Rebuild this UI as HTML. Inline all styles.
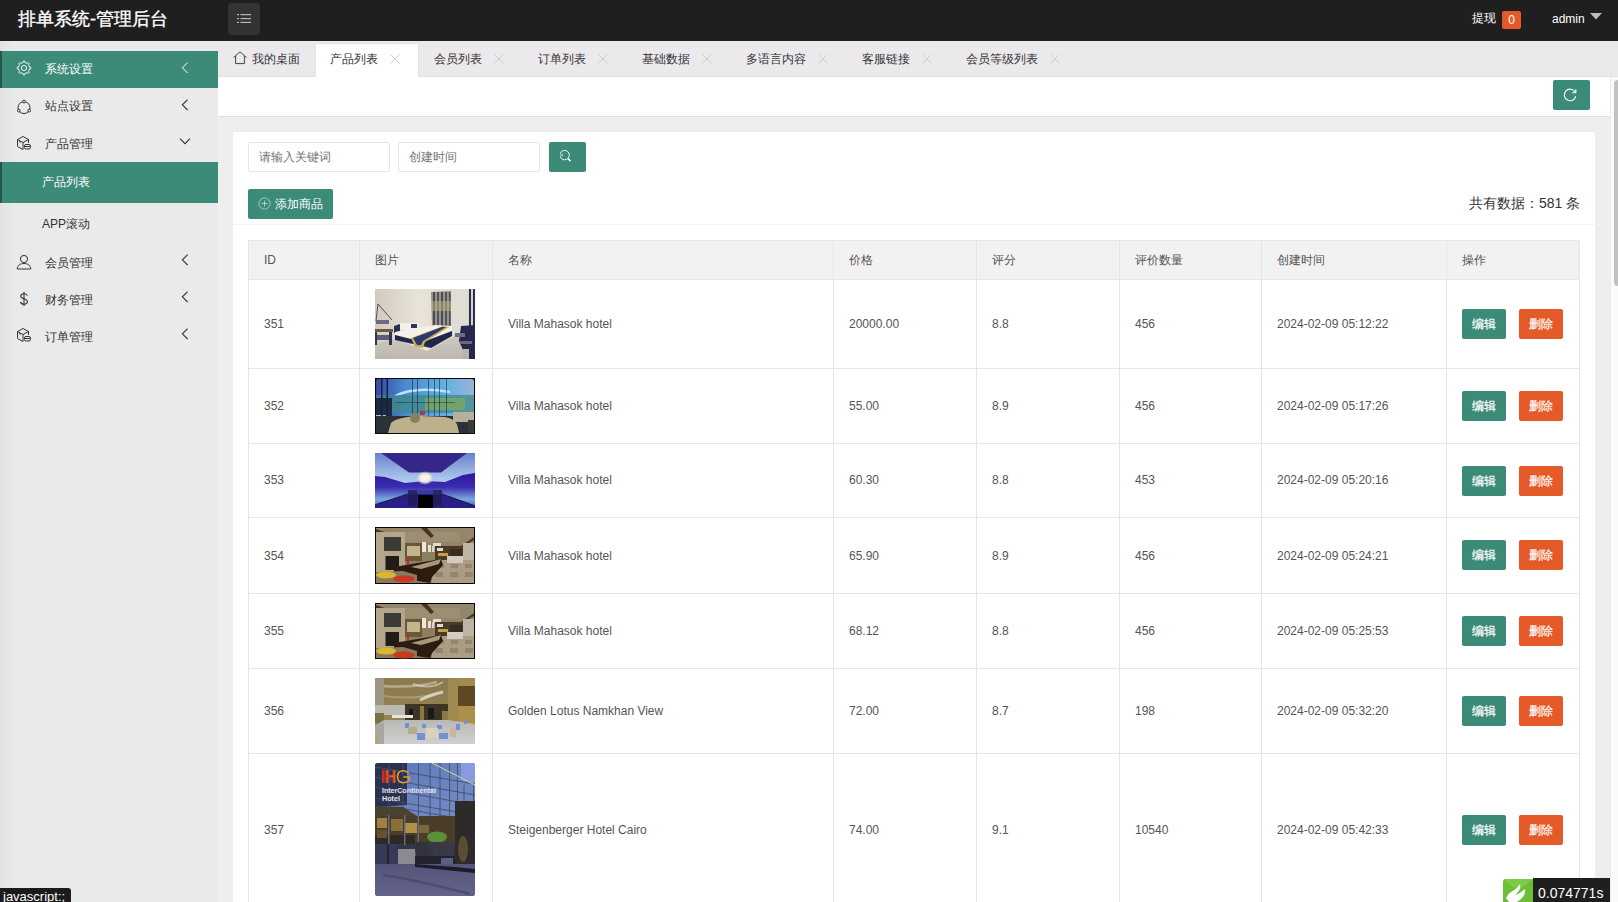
<!DOCTYPE html>
<html><head><meta charset="utf-8">
<style>
*{box-sizing:border-box;margin:0;padding:0}
html,body{width:1618px;height:902px;overflow:hidden;font-family:"Liberation Sans",sans-serif;background:#eeeeee;color:#333}
.abs{position:absolute}
#top{position:absolute;left:0;top:0;width:1618px;height:41px;background:#1f1f1f}
#title{position:absolute;left:18px;top:7px;font-size:18px;color:#fff;line-height:24px;white-space:nowrap;-webkit-text-stroke:0.35px #fff}
#burger{position:absolute;left:228px;top:3px;width:32px;height:32px;background:#333;border-radius:3px}
#side{position:absolute;left:0;top:41px;width:218px;height:861px;background:#eaeaea}
.mi{position:absolute;left:0;width:218px;height:37px;font-size:12px;color:#333;line-height:37px}
.mi .t{position:absolute;left:45px;top:0}
.mi svg.ic{position:absolute;left:16px;top:11px}
.mi svg.ar{position:absolute;left:178.6px;top:10.2px}
.green{background:#3c8b79;color:#fff;box-shadow:inset 2px 0 0 #25584b}
#tabs{position:absolute;left:218px;top:41px;width:1400px;height:36px;background:#ebe9ec;border-bottom:1px solid #e2e2e2}
.tab{position:absolute;top:2px;height:34px;line-height:32px;font-size:12px;color:#333;white-space:nowrap}
.tab .x{position:absolute;top:11px}
#wbar{position:absolute;left:218px;top:77px;width:1392px;height:40px;background:#fff;border-bottom:1px solid #dedede}
#card{position:absolute;left:233px;top:132px;width:1362px;height:800px;background:#fff;border-radius:2px}
.inp{position:absolute;height:30px;border:1px solid #e6e6e6;border-radius:2px;background:#fff;font-size:12px;color:#757575;line-height:28px;padding-left:10px}
.btn{position:absolute;background:#3c8b79;color:#fff;border-radius:2px;font-size:12px;text-align:center}
table{position:absolute;left:248px;top:240px;border-collapse:collapse;font-size:12px;color:#333}
td,th{border:1px solid #e6e6e6;padding:0 15px;text-align:left;font-weight:normal}
th{background:#f2f2f2;height:40px}
.img{display:block;width:100px}
.be{display:inline-block;width:44px;height:30px;line-height:30px;text-align:center;color:#fff;border-radius:2px;font-size:12px;background:#3c8b79;-webkit-text-stroke:0.2px #fff}
.bd{background:#e55a29;margin-left:13px}
.cell{position:absolute;font-size:12px;line-height:20px;color:#555;white-space:nowrap}
.pic{position:absolute;width:100px}
</style></head><body>
<div id="top">
  <div id="title">排单系统-管理后台</div>
  <div id="burger"><svg width="32" height="32" viewBox="0 0 32 32"><g fill="#b4b4b4"><rect x="9" y="11" width="2" height="1.2"/><rect x="12.5" y="11" width="10.5" height="1.2"/><rect x="9" y="15" width="2" height="1.2"/><rect x="12.5" y="15" width="10.5" height="1.2"/><rect x="9" y="18.8" width="2" height="1.2"/><rect x="12.5" y="18.8" width="10.5" height="1.2"/></g></svg></div>
  <div class="abs" style="left:1472px;top:8px;font-size:12px;color:#fff;line-height:20px">提现</div>
  <div class="abs" style="left:1502px;top:11px;width:19px;height:18px;background:#e5582a;border-radius:2px;color:#fff;font-size:12px;line-height:18px;text-align:center">0</div>
  <div class="abs" style="left:1552px;top:9px;font-size:12px;color:#fff;line-height:20px">admin</div>
  <svg class="abs" style="left:1590px;top:13px" width="12" height="7" viewBox="0 0 12 7"><path d="M0 0H12L6 6.5Z" fill="#bdbdbd"/></svg>
</div>
<div id="side">
  <div class="abs" style="left:0;top:0;width:14px;height:861px;background:linear-gradient(90deg,#e2e2e2,#eaeaea)"></div>
  <div class="mi green" style="top:10px"><svg class="ic" style="top:9px" width="16" height="16" viewBox="0 0 16 16"><path d="M13.08 5.90 L13.42 7.05 L14.86 7.24 L14.86 8.76 L13.42 8.95 L13.08 10.10 L12.50 11.16 L13.38 12.31 L12.31 13.38 L11.16 12.50 L10.10 13.08 L8.95 13.42 L8.76 14.86 L7.24 14.86 L7.05 13.42 L5.90 13.08 L4.84 12.50 L3.69 13.38 L2.62 12.31 L3.50 11.16 L2.92 10.10 L2.58 8.95 L1.14 8.76 L1.14 7.24 L2.58 7.05 L2.92 5.90 L3.50 4.84 L2.62 3.69 L3.69 2.62 L4.84 3.50 L5.90 2.92 L7.05 2.58 L7.24 1.14 L8.76 1.14 L8.95 2.58 L10.10 2.92 L11.16 3.50 L12.31 2.62 L13.38 3.69 L12.50 4.84Z" fill="none" stroke="#fff" stroke-width="0.9" stroke-linejoin="round"/><circle cx="8" cy="8" r="2.6" fill="none" stroke="#fff" stroke-width="0.9"/></svg><span class="t">系统设置</span><svg class="ar" width="14" height="14" viewBox="0 0 14 14"><path d="M8.6 1.6L3.4 6.8L8.6 12" fill="none" stroke="#fff" stroke-width="1"/></svg></div>
  <div class="mi" style="top:47px"><svg class="ic" width="16" height="16" viewBox="0 0 16 16"><circle cx="8" cy="8.6" r="6" fill="none" stroke="#333" stroke-width="1"/><circle cx="8" cy="2.6" r="1.4" fill="#eaeaea" stroke="#333" stroke-width="1"/><circle cx="2.8" cy="11.6" r="1.4" fill="#eaeaea" stroke="#333" stroke-width="1"/><circle cx="13.2" cy="11.6" r="1.4" fill="#eaeaea" stroke="#333" stroke-width="1"/></svg><span class="t">站点设置</span><svg class="ar" width="14" height="14" viewBox="0 0 14 14"><path d="M8.6 1.6L3.4 6.8L8.6 12" fill="none" stroke="#333" stroke-width="1.1"/></svg></div>
  <div class="mi" style="top:84px"><svg class="ic" style="top:10px" width="16" height="16" viewBox="0 0 16 16"><g fill="none" stroke="#333" stroke-width="1"><path d="M1.5 4.5L7 1.5L12.5 4.5L7 7.5Z"/><path d="M1.5 4.5V11.5L7 14.5V7.5"/><path d="M12.5 4.5V8"/><path d="M3 6.5L4.5 7.3"/><rect x="8.5" y="9.5" width="6" height="4.5" rx="1.5"/><path d="M8.5 11.5h6"/></g></svg><span class="t" style="top:1px">产品管理</span><svg class="ar" style="left:178px;top:11.3px" width="14" height="14" viewBox="0 0 14 14"><path d="M2 2.6L7 7.6L12 2.6" fill="none" stroke="#333" stroke-width="1.1"/></svg></div>
  <div class="mi green" style="top:121px;height:41px;line-height:41px"><span class="t" style="left:42px">产品列表</span></div>
  <div class="mi" style="top:162px;height:40px;line-height:40px"><span class="t" style="left:42px;top:1px">APP滚动</span></div>
  <div class="mi" style="top:202px"><svg class="ic" width="16" height="16" viewBox="0 0 16 16"><g fill="none" stroke="#333" stroke-width="1"><circle cx="8" cy="5" r="3.6"/><path d="M1.2 15C1.5 11 4.5 9.5 8 9.5S14.5 11 14.8 15Z"/></g></svg><span class="t" style="top:2px">会员管理</span><svg class="ar" width="14" height="14" viewBox="0 0 14 14"><path d="M8.6 1.6L3.4 6.8L8.6 12" fill="none" stroke="#333" stroke-width="1.1"/></svg></div>
  <div class="mi" style="top:239px"><svg class="ic" width="16" height="16" viewBox="0 0 16 16"><g fill="none" stroke="#333" stroke-width="1.1"><path d="M11.3 4.6C10.8 3.4 9.6 2.8 8 2.8 6 2.8 4.8 3.8 4.8 5.2 4.8 8.2 11.4 7.2 11.4 10.6 11.4 12.2 10 13.2 8 13.2 6.1 13.2 4.9 12.4 4.5 11"/><path d="M8 1V15"/></g></svg><span class="t" style="top:2px">财务管理</span><svg class="ar" width="14" height="14" viewBox="0 0 14 14"><path d="M8.6 1.6L3.4 6.8L8.6 12" fill="none" stroke="#333" stroke-width="1.1"/></svg></div>
  <div class="mi" style="top:276px"><svg class="ic" style="top:10px" width="16" height="16" viewBox="0 0 16 16"><g fill="none" stroke="#333" stroke-width="1"><path d="M1.5 4.5L7 1.5L12.5 4.5L7 7.5Z"/><path d="M1.5 4.5V11.5L7 14.5V7.5"/><path d="M12.5 4.5V8"/><path d="M3 6.5L4.5 7.3"/><rect x="8.5" y="9.5" width="6" height="4.5" rx="1.5"/><path d="M8.5 11.5h6"/></g></svg><span class="t" style="top:2px">订单管理</span><svg class="ar" width="14" height="14" viewBox="0 0 14 14"><path d="M8.6 1.6L3.4 6.8L8.6 12" fill="none" stroke="#333" stroke-width="1.1"/></svg></div>
</div>
<div id="tabs">
<div class="tab" style="left:0;width:98px"><svg class="abs" style="left:15px;top:7.5px" width="14" height="14" viewBox="0 0 14 14"><path d="M0.5 6.5L7 0.8L13.5 6.5M2.6 4.8V12.6H11.4V4.8" fill="none" stroke="#333" stroke-width="0.9"/></svg><span class="abs" style="left:34px">我的桌面</span></div>
<div class="tab" style="left:97px;width:104px;background:#fff;border:1px solid #e4e4e4;border-bottom:none;height:35px"><span class="abs" style="left:14px;top:-1px">产品列表</span><svg class="x" style="left:74px;top:10px" width="10" height="10" viewBox="0 0 10 10"><path d="M0.5 0.5L9.5 9.5M9.5 0.5L0.5 9.5" stroke="#c8c8c8" stroke-width="0.9"/></svg></div>
<div class="tab" style="left:202px;width:102px;"><span class="abs" style="left:14px">会员列表</span><svg class="x" style="left:74px" width="10" height="10" viewBox="0 0 10 10"><path d="M0.5 0.5L9.5 9.5M9.5 0.5L0.5 9.5" stroke="#c8c8c8" stroke-width="0.9"/></svg></div>
<div class="tab" style="left:306px;width:102px;"><span class="abs" style="left:14px">订单列表</span><svg class="x" style="left:74px" width="10" height="10" viewBox="0 0 10 10"><path d="M0.5 0.5L9.5 9.5M9.5 0.5L0.5 9.5" stroke="#c8c8c8" stroke-width="0.9"/></svg></div>
<div class="tab" style="left:410px;width:102px;"><span class="abs" style="left:14px">基础数据</span><svg class="x" style="left:74px" width="10" height="10" viewBox="0 0 10 10"><path d="M0.5 0.5L9.5 9.5M9.5 0.5L0.5 9.5" stroke="#c8c8c8" stroke-width="0.9"/></svg></div>
<div class="tab" style="left:514px;width:114px;"><span class="abs" style="left:14px">多语言内容</span><svg class="x" style="left:86px" width="10" height="10" viewBox="0 0 10 10"><path d="M0.5 0.5L9.5 9.5M9.5 0.5L0.5 9.5" stroke="#c8c8c8" stroke-width="0.9"/></svg></div>
<div class="tab" style="left:630px;width:102px;"><span class="abs" style="left:14px">客服链接</span><svg class="x" style="left:74px" width="10" height="10" viewBox="0 0 10 10"><path d="M0.5 0.5L9.5 9.5M9.5 0.5L0.5 9.5" stroke="#c8c8c8" stroke-width="0.9"/></svg></div>
<div class="tab" style="left:734px;width:126px;"><span class="abs" style="left:14px">会员等级列表</span><svg class="x" style="left:98px" width="10" height="10" viewBox="0 0 10 10"><path d="M0.5 0.5L9.5 9.5M9.5 0.5L0.5 9.5" stroke="#c8c8c8" stroke-width="0.9"/></svg></div>
</div>
<div id="wbar">
  <div class="abs" style="left:1335px;top:3px;width:37px;height:30px;background:#3c8b79;border-radius:2px"><svg class="abs" style="left:9px;top:7px" width="16" height="16" viewBox="0 0 16 16"><path d="M13.2 5.2A5.8 5.8 0 1 0 13.8 9" fill="none" stroke="#fff" stroke-width="1.1"/><path d="M13.8 2.2V5.8H10.2" fill="none" stroke="#fff" stroke-width="1.1"/></svg></div>
</div>
<div class="abs" style="left:1610px;top:77px;width:8px;height:825px;background:#fafafa;border-left:1px solid #ececec"></div>
<div class="abs" style="left:1614px;top:80px;width:8px;height:206px;background:#c1c1c1;border-radius:4px"></div>
<div id="card"></div>
<div class="inp" style="left:248px;top:142px;width:142px">请输入关键词</div>
<div class="inp" style="left:398px;top:142px;width:142px">创建时间</div>
<div class="btn" style="left:549px;top:142px;width:37px;height:30px"><svg class="abs" style="left:11px;top:8px" width="14" height="14" viewBox="0 0 14 14"><circle cx="4.6" cy="5.1" r="4.7" fill="none" stroke="#fff" stroke-width="0.9"/><path d="M8 8.6L10.6 11.2" stroke="#fff" stroke-width="1.6"/><path d="M2.2 3.8V6.4" stroke="#fff" stroke-width="0.8"/></svg></div>
<div class="btn" style="left:248px;top:189px;width:85px;height:30px;line-height:30px;text-align:left;padding-left:27px"><svg class="abs" style="left:10px;top:8px" width="13" height="13" viewBox="0 0 13 13"><circle cx="6.5" cy="6.5" r="5.6" fill="none" stroke="#fff" stroke-opacity="0.75" stroke-width="0.7"/><path d="M6.5 3.5V9.5M3.5 6.5H9.5" stroke="#fff" stroke-opacity="0.8" stroke-width="0.7"/></svg>添加商品</div>
<div class="abs" style="left:1469px;top:193px;font-size:14px;line-height:20px;color:#333;white-space:nowrap">共有数据：581 条</div>
<div class="abs" style="left:233px;top:224px;width:1362px;height:1px;background:#f2f2f2"></div>
<div id="grid">
<div class="abs" style="left:249px;top:241px;width:1330px;height:38px;background:#f2f2f2"></div>
<div class="abs" style="left:248px;top:240px;width:1332px;height:1px;background:#e6e6e6"></div>
<div class="abs" style="left:248px;top:279px;width:1332px;height:1px;background:#e6e6e6"></div>
<div class="abs" style="left:248px;top:368px;width:1332px;height:1px;background:#e6e6e6"></div>
<div class="abs" style="left:248px;top:443px;width:1332px;height:1px;background:#e6e6e6"></div>
<div class="abs" style="left:248px;top:517px;width:1332px;height:1px;background:#e6e6e6"></div>
<div class="abs" style="left:248px;top:593px;width:1332px;height:1px;background:#e6e6e6"></div>
<div class="abs" style="left:248px;top:668px;width:1332px;height:1px;background:#e6e6e6"></div>
<div class="abs" style="left:248px;top:753px;width:1332px;height:1px;background:#e6e6e6"></div>
<div class="abs" style="left:248px;top:240px;width:1px;height:662px;background:#e6e6e6"></div>
<div class="abs" style="left:359px;top:240px;width:1px;height:662px;background:#e6e6e6"></div>
<div class="abs" style="left:492px;top:240px;width:1px;height:662px;background:#e6e6e6"></div>
<div class="abs" style="left:833px;top:240px;width:1px;height:662px;background:#e6e6e6"></div>
<div class="abs" style="left:976px;top:240px;width:1px;height:662px;background:#e6e6e6"></div>
<div class="abs" style="left:1119px;top:240px;width:1px;height:662px;background:#e6e6e6"></div>
<div class="abs" style="left:1261px;top:240px;width:1px;height:662px;background:#e6e6e6"></div>
<div class="abs" style="left:1446px;top:240px;width:1px;height:662px;background:#e6e6e6"></div>
<div class="abs" style="left:1579px;top:240px;width:1px;height:662px;background:#e6e6e6"></div>
<div class="cell" style="left:264px;top:250px">ID</div>
<div class="cell" style="left:375px;top:250px">图片</div>
<div class="cell" style="left:508px;top:250px">名称</div>
<div class="cell" style="left:849px;top:250px">价格</div>
<div class="cell" style="left:992px;top:250px">评分</div>
<div class="cell" style="left:1135px;top:250px">评价数量</div>
<div class="cell" style="left:1277px;top:250px">创建时间</div>
<div class="cell" style="left:1462px;top:250px">操作</div>
<div class="cell" style="left:264px;top:314px">351</div>
<div class="cell" style="left:508px;top:314px">Villa Mahasok hotel</div>
<div class="cell" style="left:849px;top:314px">20000.00</div>
<div class="cell" style="left:992px;top:314px">8.8</div>
<div class="cell" style="left:1135px;top:314px">456</div>
<div class="cell" style="left:1277px;top:314px">2024-02-09 05:12:22</div>
<div class="pic p1" style="left:375px;top:289px;height:70px"><svg width="100" height="70" viewBox="0 0 100 70" preserveAspectRatio="none" style="display:block">
<defs><linearGradient id="g1w" x1="0" y1="0" x2="1" y2="0"><stop offset="0" stop-color="#d2ccbd"/><stop offset="0.45" stop-color="#e8e4d8"/><stop offset="1" stop-color="#d8d3c8"/></linearGradient>
<linearGradient id="g1f" x1="0" y1="0" x2="0" y2="1"><stop offset="0" stop-color="#cdc9bf"/><stop offset="1" stop-color="#bdb8ad"/></linearGradient></defs>
<rect width="100" height="70" fill="url(#g1w)"/>
<polygon points="0,55 20,50 52,62 80,47 100,50 100,70 0,70" fill="url(#g1f)"/>
<polygon points="56,3 76,2 76,37 57,38" fill="#9a9478"/>
<rect x="58" y="3" width="2" height="35" fill="#454866"/><rect x="62" y="3" width="2" height="35" fill="#505470"/><rect x="66" y="3" width="2" height="35" fill="#454866"/><rect x="70" y="3" width="2" height="35" fill="#505470"/><rect x="74" y="3" width="1.5" height="35" fill="#454866"/>
<rect x="56" y="12" width="20" height="10" fill="#c0b080" opacity="0.55"/>
<rect x="77" y="0" width="16" height="45" fill="#e0ddd4"/>
<rect x="94" y="0" width="2" height="40" fill="#2d2f5a"/><rect x="98" y="0" width="2" height="40" fill="#2d2f5a"/>
<path d="M1 32L3 15L17 31" fill="none" stroke="#3d4160" stroke-width="0.9"/>
<rect x="1" y="31" width="13" height="4" fill="#6a6b7e"/>
<rect x="0" y="40" width="18" height="3" fill="#6a5a45"/>
<rect x="0" y="43" width="2" height="13" fill="#30325a"/><rect x="14" y="43" width="3" height="13" fill="#30325a"/>
<rect x="2" y="46" width="12" height="5" fill="#5a5c78"/>
<rect x="24" y="34" width="20" height="7" fill="#f2efe8"/>
<rect x="36" y="35" width="6" height="4" fill="#2d3366"/>
<rect x="44" y="36" width="9" height="4" fill="#e8e4da"/>
<polygon points="19,37 25,35 25,42 19,44" fill="#2d2f55"/>
<polygon points="20,43 60,36 77,37 77,42 48,52 20,46" fill="#f3f1ea"/>
<polygon points="20,46 48,53 77,42 77,47 56,59 20,51" fill="#23254a"/>
<polygon points="36,49 68,37 74,38 50,53 48,59 40,58" fill="#c9ad55"/>
<polygon points="38,49 67,38 71,38 48,52 46,56 42,56" fill="#2c3870"/>
<polygon points="86,37 100,36 100,70 92,70 84,52" fill="#26264e"/>
<rect x="80" y="44" width="10" height="4" fill="#6a6e84"/>
<rect x="85" y="52" width="12" height="3" fill="#6a6878"/>
<rect x="88" y="60" width="6" height="10" fill="#b8b4aa"/>
</svg></div>
<div class="be" style="position:absolute;left:1462px;top:309px">编辑</div><div class="be bd" style="position:absolute;left:1519px;top:309px;margin:0">删除</div>
<div class="cell" style="left:264px;top:396px">352</div>
<div class="cell" style="left:508px;top:396px">Villa Mahasok hotel</div>
<div class="cell" style="left:849px;top:396px">55.00</div>
<div class="cell" style="left:992px;top:396px">8.9</div>
<div class="cell" style="left:1135px;top:396px">456</div>
<div class="cell" style="left:1277px;top:396px">2024-02-09 05:17:26</div>
<div class="pic p2" style="left:375px;top:378px;height:56px"><svg width="100" height="56" viewBox="0 0 100 56" preserveAspectRatio="none" style="display:block">
<defs><linearGradient id="g2s" x1="0" y1="0" x2="1" y2="0"><stop offset="0" stop-color="#3848a8"/><stop offset="0.3" stop-color="#4a8ad0"/><stop offset="0.7" stop-color="#62b0e0"/><stop offset="1" stop-color="#9ab4d8"/></linearGradient></defs>
<rect width="100" height="56" fill="#0a0a0a"/>
<rect x="1" y="1" width="98" height="54" rx="2" fill="url(#g2s)"/>
<path d="M20 18Q40 8 75 14" stroke="#b6e8f6" stroke-width="2.5" fill="none"/>
<rect x="1" y="17" width="98" height="18" fill="#3e8a8a" opacity="0.75"/>
<rect x="50" y="20" width="40" height="12" fill="#7aa860" opacity="0.8"/>
<rect x="1" y="20" width="16" height="20" fill="#1c2a40"/>
<rect x="1" y="37" width="10" height="9" fill="#8ad0e8"/>
<rect x="6" y="1" width="1.5" height="54" fill="#12203a"/><rect x="11.5" y="1" width="1.5" height="54" fill="#12203a"/>
<g fill="#1a2a3a" opacity="0.75"><rect x="37" y="1" width="0.8" height="38"/><rect x="42" y="1" width="0.8" height="38"/><rect x="53" y="1" width="0.8" height="38"/><rect x="59" y="1" width="0.8" height="38"/><rect x="64" y="1" width="0.8" height="38"/><rect x="71" y="1" width="0.8" height="38"/></g>
<rect x="20" y="24" width="60" height="0.7" fill="#102030" opacity="0.6"/>
<rect x="1" y="38" width="98" height="17" fill="#2b3236"/>
<rect x="78" y="34" width="21" height="10" fill="#b7b09c"/>
<path d="M13 55L16 45Q22 39 45 38L70 39Q82 41 83 50L84 55Z" fill="#bdb08c"/>
<ellipse cx="40" cy="40" rx="5" ry="5" fill="#8a8060"/>
<rect x="45" y="33" width="5" height="4" fill="#c03030"/>
<rect x="93" y="42" width="6" height="13" fill="#3a3a3a"/>
</svg></div>
<div class="be" style="position:absolute;left:1462px;top:391px">编辑</div><div class="be bd" style="position:absolute;left:1519px;top:391px;margin:0">删除</div>
<div class="cell" style="left:264px;top:470px">353</div>
<div class="cell" style="left:508px;top:470px">Villa Mahasok hotel</div>
<div class="cell" style="left:849px;top:470px">60.30</div>
<div class="cell" style="left:992px;top:470px">8.8</div>
<div class="cell" style="left:1135px;top:470px">453</div>
<div class="cell" style="left:1277px;top:470px">2024-02-09 05:20:16</div>
<div class="pic p3" style="left:375px;top:453px;height:55px"><svg width="100" height="55" viewBox="0 0 100 55" preserveAspectRatio="none" style="display:block">
<defs><linearGradient id="g3w" x1="0" y1="0" x2="0" y2="1"><stop offset="0" stop-color="#6a80d0"/><stop offset="0.45" stop-color="#a8c4ea"/><stop offset="1" stop-color="#dceaf6"/></linearGradient>
<linearGradient id="g3b" x1="0" y1="0" x2="0" y2="1"><stop offset="0" stop-color="#2e18a0"/><stop offset="0.4" stop-color="#3a2cb0"/><stop offset="0.75" stop-color="#7aa8e0"/><stop offset="1" stop-color="#4a60c8"/></linearGradient>
<radialGradient id="g3l" cx="0.5" cy="0.5" r="0.5"><stop offset="0" stop-color="#fff8e8"/><stop offset="0.6" stop-color="#f0ecd8"/><stop offset="1" stop-color="#a8c8e8" stop-opacity="0"/></radialGradient></defs>
<rect width="100" height="55" fill="url(#g3w)"/>
<polygon points="6,0 92,0 66,19.5 34,19.5" fill="#35278a"/>
<polygon points="0,23 10,24 30,30 50,28 70,29 88,22 100,20 100,55 0,55" fill="url(#g3b)"/>
<ellipse cx="50" cy="25" rx="9" ry="7" fill="url(#g3l)"/>
<polygon points="0,52 33,41 67,41 100,53 100,55 0,55" fill="#2a1e88"/>
<path d="M0 52L33 41M67 41L100 53" stroke="#1a1a50" stroke-width="1.2"/>
<rect x="33" y="37" width="34" height="4" fill="#3a3aa0"/>
<rect x="43" y="42" width="15" height="13" fill="#020204"/>
<rect x="33" y="37" width="9" height="16" fill="#1a1a40" opacity="0.6"/>
<rect x="58" y="37" width="9" height="16" fill="#1a1a40" opacity="0.6"/>
</svg></div>
<div class="be" style="position:absolute;left:1462px;top:466px">编辑</div><div class="be bd" style="position:absolute;left:1519px;top:466px;margin:0">删除</div>
<div class="cell" style="left:264px;top:546px">354</div>
<div class="cell" style="left:508px;top:546px">Villa Mahasok hotel</div>
<div class="cell" style="left:849px;top:546px">65.90</div>
<div class="cell" style="left:992px;top:546px">8.9</div>
<div class="cell" style="left:1135px;top:546px">456</div>
<div class="cell" style="left:1277px;top:546px">2024-02-09 05:24:21</div>
<div class="pic p4" style="left:375px;top:527px;height:57px"><svg width="100" height="57" viewBox="0 0 100 57" preserveAspectRatio="none" style="display:block">
<rect width="100" height="57" fill="#0a0806"/>
<rect x="1" y="1" width="98" height="55" rx="2" fill="#8e7e62"/>
<rect x="1" y="1" width="98" height="17" fill="#94866a"/>
<rect x="30" y="5" width="55" height="10" fill="#a09278" opacity="0.7"/>
<polygon points="46,1 52,1 59,9 56,11" fill="#4a3420"/>
<polygon points="1,2 30,12 30,14 1,5" fill="#4a3624"/>
<polygon points="86,19 99,10 99,13 86,21" fill="#4a3624"/>
<rect x="1" y="5" width="29" height="49" fill="#b4a68a"/>
<rect x="9" y="10" width="17" height="14" fill="#3c3a36"/>
<rect x="10.5" y="29" width="13.5" height="14" fill="#221c16"/>
<rect x="30" y="16" width="17" height="18" fill="#6a5638"/>
<rect x="32" y="19" width="13" height="10" fill="#c4b48c"/>
<rect x="60" y="19" width="28" height="15" fill="#4a3a28"/>
<rect x="62" y="21" width="6" height="3" fill="#e0dcd0"/>
<rect x="63" y="26" width="10" height="3" fill="#c8a040"/>
<rect x="75" y="22" width="12" height="8" fill="#3a2c20"/>
<rect x="88" y="16" width="11" height="39" fill="#bcb4a4"/>
<rect x="47" y="15" width="4" height="10" fill="#ece8dc"/><rect x="53" y="18" width="3" height="7" fill="#e4dfd2"/><rect x="57" y="19" width="2.5" height="6" fill="#dcd6c8"/>
<rect x="58" y="16" width="8" height="3" fill="#e0dcd0"/>
<polygon points="60,33 99,33 99,56 57,56 57,48" fill="#ab9d84"/>
<g fill="#938670"><rect x="62" y="37" width="7" height="4"/><rect x="76" y="37" width="7" height="4"/><rect x="90" y="37" width="7" height="4"/><rect x="60" y="45" width="8" height="5"/><rect x="75" y="45" width="8" height="5"/><rect x="90" y="45" width="8" height="5"/></g>
<rect x="72" y="29" width="16" height="7" fill="#d4ccbc"/>
<polygon points="19,40 66,32 68,38 57,50 55,56 19,50" fill="#2c1c10"/>
<polygon points="36,40 66,32 64,37 46,42" fill="#a89878"/>
<polygon points="1,45 28,44 42,48 42,56 1,56" fill="#8a7a60"/>
<ellipse cx="11" cy="48" rx="10" ry="3.5" fill="#d8b830"/>
<ellipse cx="29" cy="52" rx="11" ry="3.5" fill="#c83a20"/>
<rect x="32" y="30" width="2" height="8" fill="#b03030"/>
</svg></div>
<div class="be" style="position:absolute;left:1462px;top:540px">编辑</div><div class="be bd" style="position:absolute;left:1519px;top:540px;margin:0">删除</div>
<div class="cell" style="left:264px;top:621px">355</div>
<div class="cell" style="left:508px;top:621px">Villa Mahasok hotel</div>
<div class="cell" style="left:849px;top:621px">68.12</div>
<div class="cell" style="left:992px;top:621px">8.8</div>
<div class="cell" style="left:1135px;top:621px">456</div>
<div class="cell" style="left:1277px;top:621px">2024-02-09 05:25:53</div>
<div class="pic p5" style="left:375px;top:603px;height:56px"><svg width="100" height="56" viewBox="0 0 100 56" preserveAspectRatio="none" style="display:block">
<rect width="100" height="56" fill="#0a0806"/>
<rect x="1" y="1" width="98" height="54" rx="2" fill="#8e7e62"/>
<rect x="1" y="1" width="98" height="17" fill="#94866a"/>
<rect x="30" y="5" width="55" height="10" fill="#a09278" opacity="0.7"/>
<polygon points="46,1 52,1 59,9 56,11" fill="#4a3420"/>
<polygon points="1,2 30,12 30,14 1,5" fill="#4a3624"/>
<polygon points="86,19 99,10 99,13 86,21" fill="#4a3624"/>
<rect x="1" y="5" width="29" height="48" fill="#b4a68a"/>
<rect x="9" y="10" width="17" height="14" fill="#3c3a36"/>
<rect x="10.5" y="29" width="13.5" height="14" fill="#221c16"/>
<rect x="30" y="16" width="17" height="18" fill="#6a5638"/>
<rect x="32" y="19" width="13" height="10" fill="#c4b48c"/>
<rect x="60" y="19" width="28" height="15" fill="#4a3a28"/>
<rect x="62" y="21" width="6" height="3" fill="#e0dcd0"/>
<rect x="63" y="26" width="10" height="3" fill="#c8a040"/>
<rect x="75" y="22" width="12" height="8" fill="#3a2c20"/>
<rect x="88" y="16" width="11" height="38" fill="#bcb4a4"/>
<rect x="47" y="15" width="4" height="10" fill="#ece8dc"/><rect x="53" y="18" width="3" height="7" fill="#e4dfd2"/><rect x="57" y="19" width="2.5" height="6" fill="#dcd6c8"/>
<rect x="58" y="16" width="8" height="3" fill="#e0dcd0"/>
<polygon points="60,33 99,33 99,55 57,55 57,48" fill="#ab9d84"/>
<g fill="#938670"><rect x="62" y="37" width="7" height="4"/><rect x="76" y="37" width="7" height="4"/><rect x="90" y="37" width="7" height="4"/><rect x="60" y="45" width="8" height="5"/><rect x="75" y="45" width="8" height="5"/><rect x="90" y="45" width="8" height="5"/></g>
<rect x="72" y="29" width="16" height="7" fill="#d4ccbc"/>
<polygon points="19,40 66,32 68,38 57,50 55,55 19,50" fill="#2c1c10"/>
<polygon points="36,40 66,32 64,37 46,42" fill="#a89878"/>
<polygon points="1,45 28,44 42,48 42,55 1,55" fill="#8a7a60"/>
<ellipse cx="11" cy="48" rx="10" ry="3.5" fill="#d8b830"/>
<ellipse cx="29" cy="52" rx="11" ry="3.5" fill="#c83a20"/>
<rect x="32" y="30" width="2" height="8" fill="#b03030"/>
</svg></div>
<div class="be" style="position:absolute;left:1462px;top:616px">编辑</div><div class="be bd" style="position:absolute;left:1519px;top:616px;margin:0">删除</div>
<div class="cell" style="left:264px;top:701px">356</div>
<div class="cell" style="left:508px;top:701px">Golden Lotus Namkhan View</div>
<div class="cell" style="left:849px;top:701px">72.00</div>
<div class="cell" style="left:992px;top:701px">8.7</div>
<div class="cell" style="left:1135px;top:701px">198</div>
<div class="cell" style="left:1277px;top:701px">2024-02-09 05:32:20</div>
<div class="pic p6" style="left:375px;top:678px;height:66px"><svg width="100" height="66" viewBox="0 0 100 66" preserveAspectRatio="none" style="display:block">
<defs><linearGradient id="g6t" x1="0" y1="0" x2="0" y2="1"><stop offset="0" stop-color="#8a7a4c"/><stop offset="1" stop-color="#9c8a54"/></linearGradient>
<linearGradient id="g6f" x1="0" y1="0" x2="0" y2="1"><stop offset="0" stop-color="#b8b8b4"/><stop offset="1" stop-color="#d0d0d0"/></linearGradient></defs>
<rect width="100" height="66" fill="url(#g6t)"/>
<path d="M8 8Q40 10 62 4" stroke="#c8bea0" stroke-width="2.5" fill="none" opacity="0.7"/>
<path d="M8 18Q38 22 60 16" stroke="#b8ae90" stroke-width="2" fill="none" opacity="0.6"/>
<path d="M38 6Q55 12 68 4" stroke="#dcdcd8" stroke-width="2" fill="none" opacity="0.6"/>
<path d="M45 22Q58 16 68 14" stroke="#e8e8e4" stroke-width="3" fill="none" opacity="0.75"/>
<rect x="0" y="0" width="9" height="36" fill="#9c9680"/>
<rect x="0" y="27" width="38" height="10" fill="#bcbab0"/>
<rect x="0" y="35" width="9" height="10" fill="#7a7040"/>
<rect x="30" y="26" width="43" height="17" fill="#3e3424"/>
<rect x="34" y="31" width="4" height="8" fill="#14141e"/><rect x="53" y="30" width="6" height="11" fill="#1a1a1a"/>
<rect x="45" y="28" width="4" height="14" fill="#8a7a48"/>
<rect x="73" y="0" width="10" height="48" fill="#9c8a52"/>
<rect x="83" y="0" width="17" height="9" fill="#a08c50"/>
<rect x="83" y="8" width="17" height="21" fill="#5e4824"/>
<rect x="83" y="28" width="17" height="20" fill="#ac9048"/>
<rect x="67" y="33" width="6" height="12" fill="#8c7844"/>
<polygon points="9,42 73,42 100,46 100,66 0,66 0,48" fill="url(#g6f)"/>
<polygon points="0,48 9,44 9,66 0,66" fill="#a8a8a0"/>
<rect x="17" y="37" width="21" height="3" fill="#e4e4e4"/>
<g fill="#7490d4"><rect x="30" y="45" width="4" height="5"/><rect x="42" y="55" width="8" height="7"/><rect x="64" y="55" width="9" height="6"/><rect x="47" y="46" width="4" height="4"/><rect x="62" y="47" width="5" height="4"/><rect x="81" y="46" width="4" height="6"/><rect x="89" y="42" width="3" height="4"/></g>
<rect x="51" y="50" width="12" height="10" fill="#d8d2bc"/>
<rect x="33" y="49" width="9" height="7" fill="#b8aa8c"/>
<rect x="75" y="50" width="6" height="9" fill="#c8b898"/>
<rect x="2" y="56" width="1" height="10" fill="#c0a030"/>
</svg></div>
<div class="be" style="position:absolute;left:1462px;top:696px">编辑</div><div class="be bd" style="position:absolute;left:1519px;top:696px;margin:0">删除</div>
<div class="cell" style="left:264px;top:820px">357</div>
<div class="cell" style="left:508px;top:820px">Steigenberger Hotel Cairo</div>
<div class="cell" style="left:849px;top:820px">74.00</div>
<div class="cell" style="left:992px;top:820px">9.1</div>
<div class="cell" style="left:1135px;top:820px">10540</div>
<div class="cell" style="left:1277px;top:820px">2024-02-09 05:42:33</div>
<div class="pic p7" style="left:375px;top:763px;height:133px"><svg width="100" height="133" viewBox="0 0 100 133" preserveAspectRatio="none" style="display:block">
<defs><linearGradient id="g7p" x1="0" y1="0" x2="0" y2="1"><stop offset="0" stop-color="#55557a"/><stop offset="1" stop-color="#64648a"/></linearGradient>
<linearGradient id="g7g" x1="0" y1="0" x2="1" y2="1"><stop offset="0" stop-color="#5a78b8"/><stop offset="1" stop-color="#7890c8"/></linearGradient>
<linearGradient id="g7h" x1="0" y1="0" x2="1" y2="0"><stop offset="0" stop-color="#d02a20"/><stop offset="1" stop-color="#e87020"/></linearGradient>
<clipPath id="c7"><rect width="100" height="133" rx="3"/></clipPath></defs>
<g clip-path="url(#c7)">
<rect width="100" height="133" fill="#34344a"/>
<rect x="0" y="0" width="100" height="66" fill="url(#g7g)"/>
<polygon points="86,0 100,0 100,22 86,17" fill="#8a9ae0"/>
<polygon points="0,0 32,0 32,42 0,44" fill="#2a3252"/>
<g stroke="#464c6a" stroke-width="0.9" fill="none">
<path d="M14 0V80M28 0V80M43.5 0V80M55 0V80M65 0V75M74.5 0V70M82.5 0V40M89 22V40M98.5 22V40"/>
<path d="M0 4L100 21M0 14L100 32M0 24L100 42M0 35L100 52M30 46L82 55M30 56L82 63"/>
</g>
<path d="M57 0L100 22" stroke="#d8d0a0" stroke-width="1"/>
<polygon points="0,43 28,44 42,53 0,54" fill="#4a4232"/>
<polygon points="48,58 70,53 90,60 50,62" fill="#4a4030"/>
<rect x="0" y="53" width="80" height="28" fill="#4a3e2a"/><rect x="0" y="72" width="40" height="9" fill="#2e2a28"/>
<rect x="2" y="55" width="10" height="10" fill="#a08040"/>
<rect x="16" y="56" width="12" height="12" fill="#8a7038"/>
<rect x="30" y="60" width="12" height="10" fill="#b09048"/>
<rect x="44" y="62" width="10" height="8" fill="#7a6838"/>
<rect x="2" y="67" width="10" height="8" fill="#6a5030"/>
<g fill="#6a6a78"><rect x="13" y="52" width="1.5" height="30"/><rect x="29" y="52" width="1.5" height="30"/><rect x="42.5" y="52" width="1.5" height="28"/></g>
<ellipse cx="62" cy="74" rx="10" ry="5.5" fill="#5a9038"/>
<rect x="80" y="38" width="20" height="72" fill="#2e2a2a"/>
<ellipse cx="88" cy="86" rx="5" ry="13" fill="#6a5a34" opacity="0.75"/>
<rect x="0" y="81" width="23" height="20" fill="#383858"/>
<rect x="12" y="81" width="2" height="20" fill="#242436"/>
<rect x="41" y="79" width="13" height="14" fill="#33333e"/><rect x="58" y="79" width="20" height="14" fill="#383846"/>
<polygon points="23,86 40,86 41,101 23,101" fill="#8a8a90"/>
<rect x="40" y="93" width="40" height="11" fill="#242232"/>
<rect x="66" y="95" width="12" height="6" fill="#5a6080"/>
<rect x="0" y="101" width="100" height="32" fill="url(#g7p)"/>
<polygon points="40,101 80,104 100,106 100,110 40,104" fill="#1e1c2a"/>
<path d="M8 112C30 115 60 122 95 131" stroke="#484868" stroke-width="2.5" fill="none" opacity="0.8"/>
<rect x="7" y="7" width="2.6" height="13" fill="#d02a20"/>
<g fill="url(#g7h)"><rect x="10.5" y="7" width="2.8" height="13"/><rect x="17.5" y="7" width="2.8" height="13"/><rect x="10.5" y="12.2" width="9" height="2.4"/></g>
<path d="M34 10.5Q31 7.5 27.5 7.8Q22.5 8.5 22.5 13.5Q22.7 19.5 28 19.8Q31.5 19.8 34 17.5V14H28.5" fill="none" stroke="#e8a020" stroke-width="1.6"/>
<text x="7" y="30" font-family="Liberation Sans" font-size="7.2" font-weight="bold" fill="#e4e4ec" textLength="54" lengthAdjust="spacingAndGlyphs">InterContinental</text>
<text x="7" y="38" font-family="Liberation Sans" font-size="7.2" font-weight="bold" fill="#e4e4ec">Hotel</text>
</g>
</svg></div>
<div class="be" style="position:absolute;left:1462px;top:815px">编辑</div><div class="be bd" style="position:absolute;left:1519px;top:815px;margin:0">删除</div>
</div>
<div class="abs" style="left:0;top:888px;width:71px;height:14px;background:#1b1b1b;border-top-right-radius:3px;overflow:hidden"><div class="abs" style="left:3px;top:1px;font-size:13px;line-height:16px;color:#fff;white-space:nowrap">javascript:;</div></div>
<div class="abs" style="left:1503px;top:879px;width:30px;height:23px;background:#6cbe35;border-top-left-radius:3px;overflow:hidden"><svg width="30" height="23" viewBox="0 0 30 23"><polygon points="0,0 30,0 15,12" fill="#7ccb46"/><path d="M3 19C6 12 13 12 17 5C18 9 16 13 12 16C16 15 19 12 22 10C23 15 20 19 14 23H6Z" fill="#fff"/></svg></div>
<div class="abs" style="left:1533px;top:878px;width:77px;height:24px;background:#1f1f1f"><div class="abs" style="left:5px;top:6px;font-size:14px;line-height:18px;color:#fff;white-space:nowrap">0.074771s</div></div>
</body></html>
